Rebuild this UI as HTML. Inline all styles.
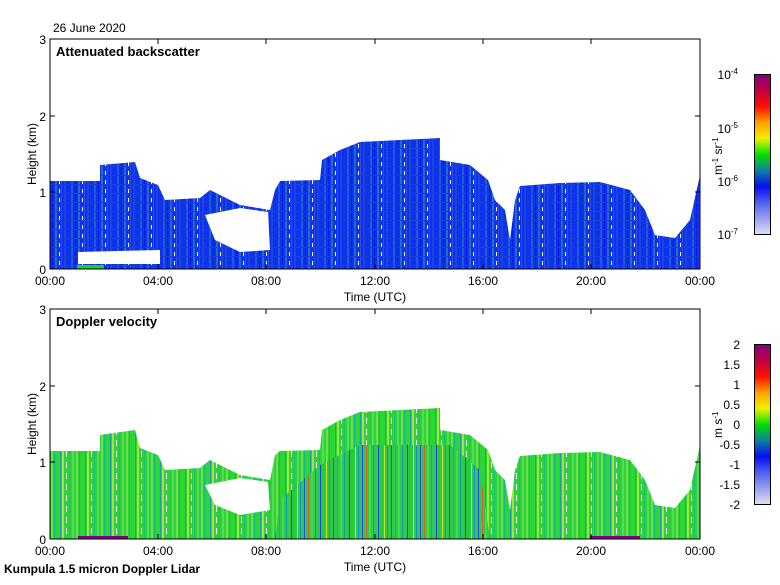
<!DOCTYPE html>
<html><head><style>
body{margin:0;background:#fff;width:780px;height:580px;overflow:hidden;font-family:"Liberation Sans",sans-serif}
</style></head><body>
<svg width="780" height="580" viewBox="0 0 780 580" xmlns="http://www.w3.org/2000/svg" font-family="Liberation Sans, sans-serif" font-size="12">
<defs>
<pattern id="pb" width="23" height="9" patternUnits="userSpaceOnUse">
<rect width="23" height="9" fill="#1030f0"/>
<rect x="2" width="2" height="9" fill="#1a5fd0"/>
<rect x="6" width="1" height="9" fill="#0818e8"/>
<rect x="9" width="2" height="9" fill="#2070c0"/>
<rect x="13" width="1" height="5" fill="#fff"/>
<rect x="15" width="1" height="9" fill="#3050e0"/>
<rect x="18" width="2" height="9" fill="#1848d8"/>
<rect x="0" y="4" width="23" height="1" fill="#1840d8"/>
</pattern>
<pattern id="pg" width="25" height="11" patternUnits="userSpaceOnUse">
<rect width="25" height="11" fill="#30d040"/>
<rect x="1" width="2" height="11" fill="#70e040"/>
<rect x="4" width="1" height="11" fill="#10b890"/>
<rect x="7" width="2" height="11" fill="#20e020"/>
<rect x="10" width="1" height="11" fill="#2a90d0"/>
<rect x="12" width="2" height="11" fill="#a0e830"/>
<rect x="16" width="1" height="6" fill="#fff"/>
<rect x="19" width="1" height="11" fill="#18c070"/>
<rect x="22" width="2" height="11" fill="#50e050"/>
</pattern>
<pattern id="pm" width="29" height="7" patternUnits="userSpaceOnUse">
<rect width="29" height="7" fill="#30c850"/>
<rect x="1" width="1" height="7" fill="#1040f0"/>
<rect x="3" width="2" height="7" fill="#20d020"/>
<rect x="7" width="1" height="7" fill="#d0e020"/>
<rect x="10" width="1" height="7" fill="#1890c0"/>
<rect x="14" width="1" height="7" fill="#2050e8"/>
<rect x="18" width="1" height="7" fill="#e06020"/>
<rect x="21" width="2" height="7" fill="#40e040"/>
<rect x="25" width="1" height="7" fill="#10a0a0"/>
</pattern>
<linearGradient id="cb" x1="0" y1="1" x2="0" y2="0">
<stop offset="0" stop-color="#e0e0f0"/><stop offset="0.2" stop-color="#5060f0"/>
<stop offset="0.3" stop-color="#0010f0"/><stop offset="0.4" stop-color="#1080a0"/>
<stop offset="0.5" stop-color="#00e000"/><stop offset="0.6" stop-color="#f0f000"/>
<stop offset="0.7" stop-color="#ffa000"/><stop offset="0.8" stop-color="#ff1000"/>
<stop offset="0.9" stop-color="#c00040"/><stop offset="1" stop-color="#800080"/>
</linearGradient>
</defs>

<text x="53" y="32">26 June 2020</text>
<polygon fill="url(#pb)" points="50,269 50,181 100,181 100,165 135,162 140,178 158,185 165,200 200,198 210,190 240,205 270,210 275,190 280,181 320,180 322,160 340,150 360,142 400,140 440,138 440,160 470,165 488,180 495,200 505,210 510,240 515,200 520,186 560,183 600,182 630,190 645,210 655,235 675,238 690,220 700,175 700,269"/>
<polygon fill="#fff" points="205,215 240,208 268,212 270,250 240,252 215,240"/>
<polygon fill="#fff" points="78,252 160,250 160,264 78,264"/>
<rect x="77" y="265" width="27" height="4" fill="#20d020"/>
<rect x="50" y="39" width="650" height="230" fill="none" stroke="#000"/>
<text x="56" y="56" font-weight="bold" font-size="13">Attenuated backscatter</text>

<polygon fill="url(#pg)" points="50,539 50,451 100,451 100,435 135,430 140,448 158,455 165,470 200,468 210,460 240,475 270,480 275,455 280,451 320,450 322,430 340,420 360,412 400,410 440,408 440,430 470,435 488,450 495,470 505,480 510,510 515,470 520,456 560,453 600,452 630,460 645,480 655,505 675,508 690,490 700,445 700,539"/>
<polygon fill="url(#pm)" points="275,539 280,500 320,465 360,445 450,445 480,470 490,539"/>
<polygon fill="#fff" points="205,485 240,478 268,482 270,510 240,515 215,505"/>
<rect x="78" y="536" width="50" height="3" fill="#800080"/>
<rect x="590" y="536" width="50" height="3" fill="#800080"/>
<rect x="50" y="309" width="650" height="230" fill="none" stroke="#000"/>
<text x="56" y="326" font-weight="bold" font-size="13">Doppler velocity</text>

<g stroke="#000">
<path d="M50,116h5M50,192h5M700,116h-5M700,192h-5M158,39v5M266,39v5M375,39v5M483,39v5M591,39v5M158,269v-5M266,269v-5M375,269v-5M483,269v-5M591,269v-5"/>
<path d="M50,386h5M50,462h5M700,386h-5M700,462h-5M158,309v5M266,309v5M375,309v5M483,309v5M591,309v5M158,539v-5M266,539v-5M375,539v-5M483,539v-5M591,539v-5"/>
</g>
<g text-anchor="end">
<text x="46" y="44">3</text><text x="46" y="121">2</text><text x="46" y="197">1</text><text x="46" y="274">0</text>
<text x="46" y="314">3</text><text x="46" y="391">2</text><text x="46" y="467">1</text><text x="46" y="544">0</text>
</g>
<g text-anchor="middle">
<text x="50" y="285">00:00</text><text x="158" y="285">04:00</text><text x="266" y="285">08:00</text><text x="375" y="285">12:00</text><text x="483" y="285">16:00</text><text x="591" y="285">20:00</text><text x="700" y="285">00:00</text>
<text x="375" y="301">Time (UTC)</text>
<text x="50" y="555">00:00</text><text x="158" y="555">04:00</text><text x="266" y="555">08:00</text><text x="375" y="555">12:00</text><text x="483" y="555">16:00</text><text x="591" y="555">20:00</text><text x="700" y="555">00:00</text>
<text x="375" y="571">Time (UTC)</text>
<text transform="translate(36,154) rotate(-90)">Height (km)</text>
<text transform="translate(36,424) rotate(-90)">Height (km)</text>
</g>
<text x="4" y="573" font-weight="bold">Kumpula 1.5 micron Doppler Lidar</text>

<rect x="754.5" y="74.5" width="16" height="160" fill="url(#cb)" stroke="#000"/>
<rect x="754.5" y="344.5" width="16" height="160" fill="url(#cb)" stroke="#000"/>
<g text-anchor="end" font-size="12">
<text x="738" y="79">10<tspan dy="-5" font-size="8">-4</tspan></text>
<text x="738" y="133">10<tspan dy="-5" font-size="8">-5</tspan></text>
<text x="738" y="186">10<tspan dy="-5" font-size="8">-6</tspan></text>
<text x="738" y="239">10<tspan dy="-5" font-size="8">-7</tspan></text>
<text x="740" y="349">2</text><text x="740" y="369">1.5</text><text x="740" y="389">1</text><text x="740" y="409">0.5</text><text x="740" y="429">0</text><text x="740" y="449">-0.5</text><text x="740" y="469">-1</text><text x="740" y="489">-1.5</text><text x="740" y="509">-2</text>
</g>
<text transform="translate(722,175) rotate(-90)">m<tspan dy="-4" font-size="8">-1</tspan><tspan dy="4"> sr</tspan><tspan dy="-4" font-size="8">-1</tspan></text>
<text transform="translate(722,438) rotate(-90)">m s<tspan dy="-4" font-size="8">-1</tspan></text>
</svg>
</body></html>
